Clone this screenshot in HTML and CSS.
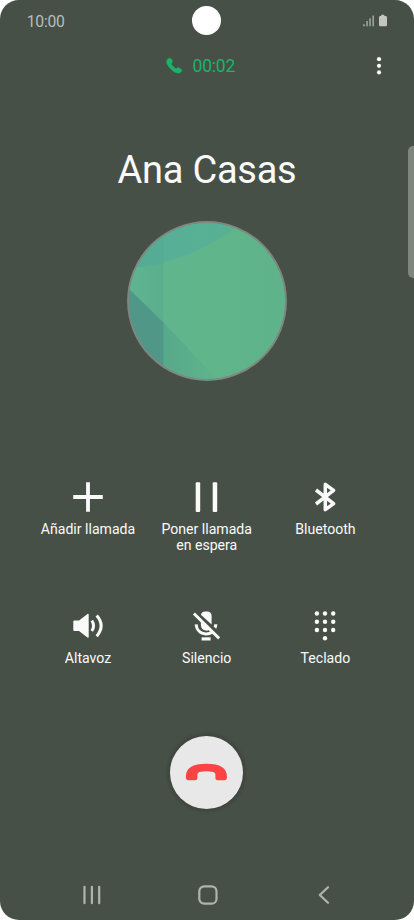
FILE: index.html
```html
<!DOCTYPE html>
<html lang="es">
<head>
<meta charset="utf-8">
<title>Llamada</title>
<link rel="stylesheet" href="styles.css">
</head>
<body>
<main class="phone">
  <header class="status">
    <span class="clock">10:00</span>
    <span class="camera"></span>
    <svg class="status-icons" width="26" height="14" viewBox="0 0 26 14">
      <path d="M.3 10.3h1.4v2H.3zM3.4 7h1.3v5.3H3.4zM6.400 4.200h1.300v8.100H6.400zM9.500 1.600h1.300v10.700H9.500z" opacity=".85"/>
      <path d="M18.200 0.700h3.200v1.300h1.200q1.400 0 1.400 1.400v7.500q0 1.400-1.400 1.400h-5.200q-1.400 0-1.400-1.400V3.400q0-1.400 1.400-1.400h.8z"/>
    </svg>
  </header>
  <section class="timer-row">
    <svg class="handset" width="17" height="17" viewBox="0 0 17 17">
      <path d="M1.300 2.500C2.600 1 4.200.700 5.100 1.900L6.300 3.800C6.800 4.700 6.300 5.400 5.500 6.300C5 7.100 6.200 8.500 7.300 9.700C8.500 10.900 9.700 12 10.600 11.400C11.500 10.700 12.200 10.400 13.100 10.900L15 12.200C16.200 13.100 15.900 14 15.100 14.800C13.100 17 9.200 16.200 5.700 12.800C1.800 9.200 -.600 5.200 1.300 2.500Z"/>
    </svg>
    <span class="timer">00:02</span>
    <svg class="more" width="6" height="20" viewBox="0 0 6 20">
      <circle cx="3" cy="3.200" r="2.100"/><circle cx="3" cy="9.800" r="2.100"/><circle cx="3" cy="16.400" r="2.100"/>
    </svg>
  </section>
  <h1 class="name">Ana Casas</h1>
  <svg class="avatar" width="160" height="160" viewBox="0 0 160 160">
    <defs>
      <clipPath id="disc"><circle cx="80" cy="80" r="78.500"/></clipPath>
      <linearGradient id="base"><stop offset="0" stop-color="#62b58e"/><stop offset=".5" stop-color="#60b58b"/><stop offset="1" stop-color="#5eb38a"/></linearGradient>
      <linearGradient id="strip"><stop offset="0" stop-color="#5fb591"/><stop offset="1" stop-color="#5bae8d"/></linearGradient>
      <linearGradient id="wedge"><stop offset="0" stop-color="#57a98b"/><stop offset="1" stop-color="#5fb48b"/></linearGradient>
      <linearGradient id="wave"><stop offset="0" stop-color="#55ae98"/><stop offset="1" stop-color="#59b193"/></linearGradient>
    </defs>
    <g clip-path="url(#disc)">
      <rect width="160" height="160" fill="url(#base)"/>
      <rect width="36.500" height="160" fill="url(#strip)"/>
      <path d="M36.500 101.500L92 160H36.500Z" fill="url(#wedge)"/>
      <path d="M0 66L36.500 101.500V160H0Z" fill="#509787"/>
      <path d="M0 47Q60 43 110 6V0H0Z" fill="url(#wave)"/>
      <path d="M0 0H36.500V42Q20 46 0 47Z" fill="#54aa94" opacity=".65"/>
    </g>
    <circle cx="80" cy="80" r="79" fill="none" stroke="#7f8781" stroke-width="1.800"/>
  </svg>
  <section class="actions">
    <div class="action">
      <svg width="34" height="34" viewBox="0 0 34 34"><path class="line" d="M17 2.200V31.800M2.200 17H31.800" stroke-width="3.800"/></svg>
      <span>Añadir llamada</span>
    </div>
    <div class="action">
      <svg width="34" height="34" viewBox="0 0 34 34"><rect x="6.700" y="2.300" width="4.500" height="29.700" rx="1"/><rect x="23.700" y="2.300" width="4.500" height="29.700" rx="1"/></svg>
      <span>Poner llamada<br>en espera</span>
    </div>
    <div class="action">
      <svg width="34" height="34" viewBox="0 0 34 34"><path class="line" d="M8 10L25.600 23.700L17.300 29.700V4.300L25.600 10.300L8 24" stroke-width="3.500" stroke-linejoin="round"/></svg>
      <span>Bluetooth</span>
    </div>
    <div class="action">
      <svg width="34" height="34" viewBox="0 0 34 34"><path d="M2.300 12.500q0-1 1-1H8L16.500 5q1.200-.7 1.200.7V27.800q0 1.300-1.200.6L8 21.900H3.300q-1 0-1-1Z"/><path class="line" d="M20.800 11.500Q24.300 16.700 20.800 22M25.700 6.500Q34.600 16.700 25.700 27.200" stroke-width="3"/></svg>
      <span>Altavoz</span>
    </div>
    <div class="action">
      <svg width="34" height="34" viewBox="-0.400 0 34 34">
        <path d="M11.500 5.800Q12.300 2.400 15.800 2.400H17.600Q22.200 2.400 22.200 7V15.500L11.500 5.800ZM11.500 11L20.500 20.500Q18.800 22 16.500 21.500Q11.500 20.800 11.500 16Z"/>
        <path class="line" d="M6.700 15.300C7.100 20.500 10.700 24.700 16.500 24.900Q20.300 25 22.600 23" stroke-width="3"/>
        <path d="M24.800 15.200H27.900Q27.900 17.600 26.700 19.700L24.300 17.400Z"/>
        <path class="line" d="M4.500 4.500L29.700 29.400" stroke-width="2.900"/><rect x="12.200" y="28.300" width="9" height="3.200"/>
      </svg>
      <span>Silencio</span>
    </div>
    <div class="action">
      <svg width="34" height="34" viewBox="0 0 34 34">
        <g><circle cx="8.900" cy="4.500" r="2.200"/><circle cx="17" cy="4.500" r="2.200"/><circle cx="25.200" cy="4.500" r="2.200"/>
        <circle cx="8.900" cy="12.700" r="2.200"/><circle cx="17" cy="12.700" r="2.200"/><circle cx="25.200" cy="12.700" r="2.200"/>
        <circle cx="8.900" cy="21" r="2.200"/><circle cx="17" cy="21" r="2.200"/><circle cx="25.200" cy="21" r="2.200"/>
        <circle cx="17" cy="29.200" r="2.200"/></g>
      </svg>
      <span>Teclado</span>
    </div>
  </section>
  <div class="hangup">
    <svg width="42" height="18" viewBox="-0.400 0 42 18"><path d="M.500 13.500C.500 5 7 .800 21 .800S41.500 5 41.500 13.500V14.500Q41.500 17.200 39 17.200H32.500Q30 17.200 30 14.700V11.500Q30 9.500 28 9Q21 7.700 14 9Q12 9.500 12 11.500V14.700Q12 17.200 9.500 17.200H3Q.500 17.200 .500 14.500Z"/></svg>
  </div>
  <nav class="nav">
    <svg width="20" height="20" viewBox="0 0 20 20"><path d="M2.500 1.800V18.200M9.900 1.800V18.200M17.200 1.800V18.200"/></svg>
    <svg width="20" height="20" viewBox="0 0 20 20"><rect x="1.300" y="1.300" width="17.200" height="17.400" rx="5"/></svg>
    <svg width="20" height="20" viewBox="0 0 20 20"><path d="M14 2.200L5.800 10L14 17.800"/></svg>
  </nav>
  <span class="edge-handle"></span>
</main>
</body>
</html>
```
FILE: styles.css
```css
* { box-sizing: border-box; }
body { margin: 0; background: #fff; font-family: Roboto, "Liberation Sans", sans-serif; }
svg { display: block; flex: none; }
.phone {
  position: relative;
  display: flex;
  flex-direction: column;
  align-items: center;
  width: 414px;
  height: 920px;
  overflow: hidden;
  border-radius: 19px;
  background: #475046;
  color: #fafafa;
}
.status {
  display: grid;
  grid-template-columns: 1fr 29px 1fr;
  align-items: center;
  width: 100%;
  height: 41px;
  padding: 0 25px 0 26px;
}
.clock { font-size: 15.700px; letter-spacing: -.25px; color: #b9bdb8; padding: 2px 0 0 .8px; }
.camera { width: 29px; height: 29px; margin-left: -1px; border-radius: 50%; background: #fff; }
.status-icons { justify-self: end; fill: #c3c6c2; }
.timer-row {
  display: grid;
  grid-template-columns: 17px 1fr 6px;
  column-gap: 10px;
  align-items: center;
  width: 100%;
  height: 49px;
  padding: 0 32px 0 165.500px;
}
.handset { fill: #1db26a; stroke: #1db26a; stroke-width: .6; }
.timer { font-size: 17.500px; letter-spacing: -.2px; color: #1db26a; }
.more { fill: #fafafa; }
.name { margin: 56px 0 0; font-size: 38px; letter-spacing: -.25px; line-height: 48px; font-weight: 400; }
.avatar { margin-top: 27px; }
.actions {
  display: grid;
  grid-template-columns: repeat(3, 118.700px);
  grid-auto-rows: 129px;
  margin: 99px .6px 0 0;
}
.action {
  display: flex;
  flex-direction: column;
  align-items: center;
  gap: 7px;
  font-size: 14.100px;
  line-height: 16px;
  text-align: center;
}
.action svg { margin-left: -.5px; fill: #fafafa; }
.action:nth-child(3n + 1) svg { margin-left: 0; }
.action .line { fill: none; stroke: #fafafa; }
.hangup {
  display: grid;
  place-items: center;
  width: 73px;
  height: 73px;
  margin: -2.500px 1px 0 0;
  padding: 0 1px 1px 0;
  border-radius: 50%;
  background: #e8e8e8;
  box-shadow: 0 0 3px 3px rgba(0, 0, 0, .12);
}
.hangup svg { fill: #fa4343; }
.nav {
  display: flex;
  justify-content: space-between;
  width: 252px;
  margin: 76.500px 0 0 2px;
}
.nav svg { fill: none; stroke: #b0b4af; stroke-width: 2.200; stroke-linecap: round; stroke-linejoin: round; }
.edge-handle {
  position: absolute;
  top: 146px;
  right: 0;
  width: 6px;
  height: 132px;
  border-radius: 5px 0 0 5px;
  background: #7f867f;
}
```
